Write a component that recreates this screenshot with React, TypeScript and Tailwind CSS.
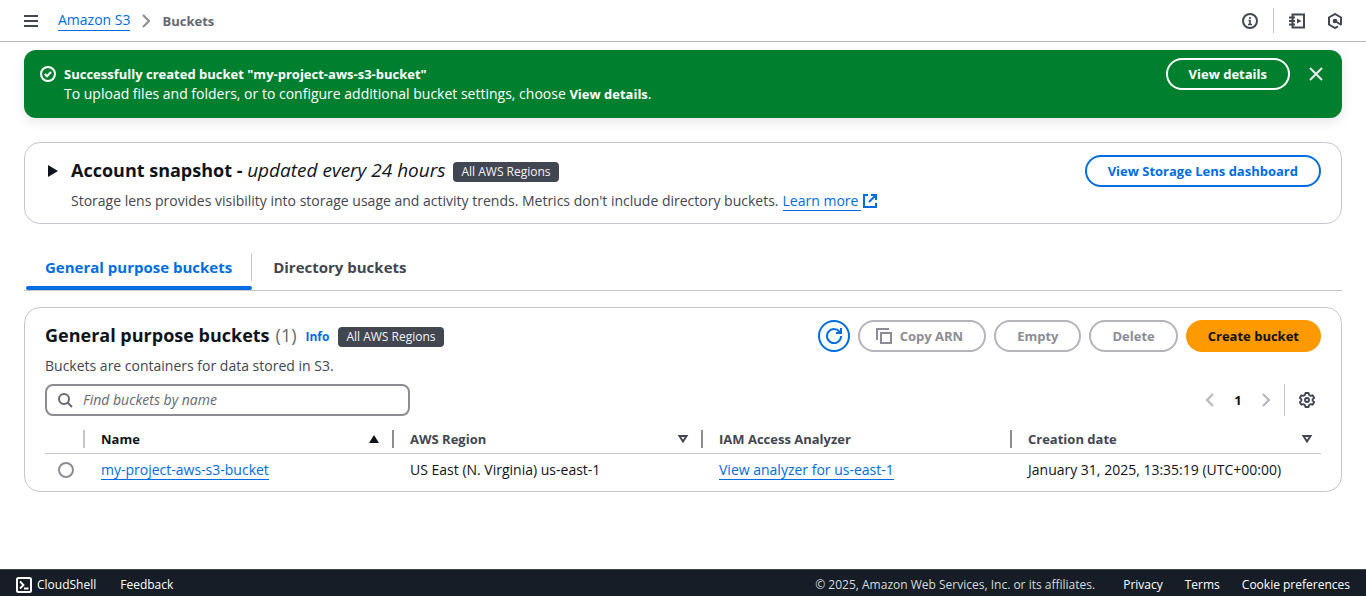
import React, { useState } from 'react';

type IconProps = { className?: string; children: React.ReactNode };

function Icon({ className = '', children }: IconProps) {
  return (
    <svg
      viewBox="0 0 16 16"
      className={`size-4 shrink-0 ${className}`}
      fill="none"
      stroke="currentColor"
      strokeWidth="2"
      aria-hidden="true"
    >
      {children}
    </svg>
  );
}

function RegionBadge() {
  return (
    <span className="mt-1 rounded bg-[#424650] px-2 text-xs leading-5 font-medium text-[#f3f3f7]">
      All AWS Regions
    </span>
  );
}

function ActionButton({ children, disabled = false }: { children: React.ReactNode; disabled?: boolean }) {
  return (
    <button
      type="button"
      disabled={disabled}
      className="flex h-8 items-center gap-2 rounded-full border-2 border-[#006ce0] px-[21px] text-[13px] font-bold whitespace-nowrap text-[#006ce0] disabled:border-[#b4b4bb] disabled:text-[#8c8c94] has-[svg]:pl-4"
    >
      {children}
    </button>
  );
}

function TopBar() {
  return (
    <header className="flex h-[42px] items-center border-b border-[#b4b4bb] px-[23px]">
      <button type="button" aria-label="Open navigation" className="text-[#424650]">
        <Icon>
          <path d="M1 3h14M1 8h14M1 13h14" />
        </Icon>
      </button>
      <nav aria-label="Breadcrumbs" className="ml-[19px] flex items-center gap-2">
        <a href="#s3" className="border-b border-[#006ce0] leading-5 text-[#006ce0]">
          Amazon S3
        </a>
        <Icon className="text-[#8c8c94]">
          <path d="m5 2 6 6-6 6" />
        </Icon>
        <span className="text-[13px] font-bold text-[#656871]">Buckets</span>
      </nav>
      <div className="ml-auto flex items-center text-[#424650]">
        <button type="button" aria-label="Info" className="px-[15px]">
          <Icon>
            <circle cx="8" cy="8" r="7" />
            <path d="M8 4v2M6.500 7.500H8V11.500M6 11.500h4" strokeWidth="1.600" />
          </Icon>
        </button>
        <span className="h-[25px] w-px bg-[#c6c6cd]" />
        <button type="button" aria-label="Tutorials" className="pr-[11px] pl-[15px]">
          <Icon>
            <path d="M3.500 1.500H15v13H3.500z" strokeWidth="2" />
            <path d="M0 4.500h6M0 8h6M0 11.500h6" strokeWidth="1.800" />
            <path d="m8 5.500 4.500 2.500L8 10.500z" fill="currentColor" stroke="none" />
          </Icon>
        </button>
        <button type="button" aria-label="Diagnose" className="pl-[11px]">
          <Icon>
            <path d="M13 11.200 14 10.500v-6L8 1 2 4.500v7L8 15l3-1.700" strokeWidth="2" />
            <path d="m8 8 6.500 4" />
            <circle cx="8" cy="8" r="2.300" fill="currentColor" stroke="none" />
          </Icon>
        </button>
      </div>
    </header>
  );
}

function SuccessBanner({ onClose }: { onClose: () => void }) {
  return (
    <section
      role="status"
      className="flex items-start rounded-xl bg-[#00802f] pt-2 pr-[10px] pb-[14px] pl-4 text-white shadow-[0_4px_12px_rgba(0,7,22,0.10)]"
    >
      <Icon className="mt-2">
        <circle cx="8" cy="8" r="7" />
        <path d="m4.800 8 2.200 2.300 4-4.300" />
      </Icon>
      <div className="ml-2 flex-1 pt-1.5 leading-5">
        <h2 className="text-[13px] leading-5 font-bold">Successfully created bucket "my-project-aws-s3-bucket"</h2>
        <p>
          To upload files and folders, or to configure additional bucket settings, choose{' '}
          <b className="text-[13px]">View details</b>.
        </p>
      </div>
      <button type="button" className="h-8 rounded-full border-2 border-white px-[21px] text-[13px] font-bold">
        View details
      </button>
      <button
        type="button"
        aria-label="Dismiss"
        onClick={onClose}
        className="ml-[10px] grid size-8 place-items-center text-[#ebebf0]"
      >
        <Icon>
          <path d="m2 2 12 12M14 2 2 14" />
        </Icon>
      </button>
    </section>
  );
}

function AccountSnapshot() {
  return (
    <section className="mt-6 flex items-start rounded-2xl border border-[#c6c6cd] px-5 pt-3 pb-3">
      <button type="button" aria-label="Expand account snapshot" className="mt-2 w-[26px] text-[#0f141a]">
        <Icon>
          <path d="m3 2 10 6-10 6z" fill="currentColor" stroke="none" />
        </Icon>
      </button>
      <div className="flex-1">
        <h2 className="flex items-center gap-2 text-lg leading-[30px] font-bold text-[#0f141a]">
          <span>
            Account snapshot - <i className="text-[19px] font-normal">updated every 24 hours</i>
          </span>
          <RegionBadge />
        </h2>
        <p className="mt-1.5 flex items-center leading-5 text-[#424650]">
          Storage lens provides visibility into storage usage and activity trends. Metrics don't include directory
          buckets.
          <a href="#learn" className="ml-1 flex items-center gap-px text-[#006ce0]">
            <span className="border-b border-[#006ce0] pr-[3px] leading-[18px]">Learn more</span>
            <Icon>
              <path d="M6 2H2v12h12v-4M9 2h5v5M14 2 7 9" />
            </Icon>
          </a>
        </p>
      </div>
      <ActionButton>View Storage Lens dashboard</ActionButton>
    </section>
  );
}

const tabs = ['General purpose buckets', 'Directory buckets'];

function Tabs() {
  const [active, setActive] = useState(0);
  return (
    <div role="tablist" className="mt-5 flex gap-0.5 border-b border-[#c6c6cd] pl-0.5 text-[15px] font-bold">
      {tabs.map((label, i) => (
        <button
          key={label}
          type="button"
          role="tab"
          aria-selected={active === i}
          onClick={() => setActive(i)}
          className="group flex flex-col text-[#424650] aria-selected:text-[#006ce0]"
        >
          <span className="mt-[9px] mb-[5px] border-[#c6c6cd] px-[19px] leading-7 group-first:border-r">{label}</span>
          <span className="h-1 w-full rounded-sm group-aria-selected:bg-[#006ce0]" />
        </button>
      ))}
    </div>
  );
}

const buckets = [
  {
    name: 'my-project-aws-s3-bucket',
    region: 'US East (N. Virginia) us-east-1',
    analyzer: 'View analyzer for us-east-1',
    created: 'January 31, 2025, 13:35:19 (UTC+00:00)',
  },
];

function SortIcon({ ascending = false }: { ascending?: boolean }) {
  return (
    <Icon>
      {ascending ? (
        <path d="M8 4 13 12H3z" fill="currentColor" stroke="none" />
      ) : (
        <path d="M4.500 5h7L8 10.500z" />
      )}
    </Icon>
  );
}

function ColumnHeader({ label, sort }: { label: string; sort?: 'asc' | 'none' }) {
  return (
    <th
      scope="col"
      aria-sort={sort === 'asc' ? 'ascending' : undefined}
      className="group border-b border-[#c6c6cd] p-0 pt-1.5 pb-[5px] aria-[sort=ascending]:text-[#0f141a]"
    >
      <div className="flex h-[18px] items-center justify-between border-[#8c8c94] pr-[10px] pl-4 group-last:pr-1.5">
        <span>{label}</span>
        {sort && <SortIcon ascending={sort === 'asc'} />}
      </div>
    </th>
  );
}

function BucketTable() {
  return (
    <table className="mt-2 w-full table-fixed border-separate border-spacing-0 text-left">
      <colgroup>
        <col className="w-10" />
        <col />
        <col />
        <col />
        <col />
      </colgroup>
      <thead className="text-[13px] text-[#424650] [&_th:not(:last-child)>div]:border-r-2">
        <tr>
          <th scope="col" aria-label="Selection" className="border-b border-[#c6c6cd] p-0 pt-1.5 pb-[5px]">
            <div className="h-[18px] border-[#c6c6cd]" />
          </th>
          <ColumnHeader label="Name" sort="asc" />
          <ColumnHeader label="AWS Region" sort="none" />
          <ColumnHeader label="IAM Access Analyzer" />
          <ColumnHeader label="Creation date" sort="none" />
        </tr>
      </thead>
      <tbody>
        {buckets.map((b) => (
          <tr key={b.name} className="h-8 text-[#0f141a]">
            <td className="p-0 pl-[13px]">
              <input
                type="radio"
                name="bucket"
                aria-label={b.name}
                className="block size-4 appearance-none rounded-full border-2 border-[#8c8c94] checked:border-[5px] checked:border-[#006ce0]"
              />
            </td>
            <td className="p-0 pl-4">
              <a href="#bucket" className="inline-block border-b border-[#006ce0] leading-[18px] text-[#006ce0]">
                {b.name}
              </a>
            </td>
            <td className="p-0 pl-4">{b.region}</td>
            <td className="p-0 pl-4">
              <a href="#analyzer" className="inline-block border-b border-[#006ce0] leading-[18px] text-[#006ce0]">
                {b.analyzer}
              </a>
            </td>
            <td className="p-0 pl-4">{b.created}</td>
          </tr>
        ))}
      </tbody>
    </table>
  );
}

function BucketsPanel() {
  return (
    <section className="mt-4 rounded-2xl border border-[#c6c6cd] px-5 pt-3 pb-[5px]">
      <div className="flex items-start justify-between">
        <div>
          <h2 className="flex items-center text-lg leading-[30px] font-bold text-[#0f141a]">
            General purpose buckets
            <span className="ml-1.5 font-normal text-[#656871]">(1)</span>
            <a href="#info" className="mx-[9px] pt-1 text-xs text-[#006ce0]">
              Info
            </a>
            <RegionBadge />
          </h2>
          <p className="mt-1.5 leading-5 text-[#424650]">Buckets are containers for data stored in S3.</p>
        </div>
        <div className="flex gap-2">
          <button
            type="button"
            aria-label="Refresh"
            className="grid size-8 place-items-center rounded-full border-2 border-[#006ce0] text-[#006ce0]"
          >
            <Icon>
              <path d="M15 8A7 7 0 1 1 14 4.500M15 0v5h-5" />
            </Icon>
          </button>
          <ActionButton disabled>
            <Icon>
              <path d="M1 12V1h12M5 5h10v10H5z" />
            </Icon>
            Copy ARN
          </ActionButton>
          <ActionButton disabled>Empty</ActionButton>
          <ActionButton disabled>Delete</ActionButton>
          <button type="button" className="h-8 rounded-full bg-[#ff9900] px-[22px] text-[13px] font-bold text-[#0f141a]">
            Create bucket
          </button>
        </div>
      </div>
      <div className="mt-2 flex items-center justify-between">
        <label className="flex h-8 w-[365px] items-center gap-[10px] rounded-lg border-2 border-[#8c8c94] px-[10px] text-[#656871]">
          <Icon>
            <circle cx="7" cy="7" r="5" />
            <path d="m10.500 10.500 4.500 4.500" />
          </Icon>
          <input
            type="text"
            aria-label="Find buckets by name"
            placeholder="Find buckets by name"
            className="min-w-0 flex-1 outline-none placeholder:text-[#656871] placeholder:italic"
          />
        </label>
        <div className="flex items-center">
          <button type="button" aria-label="Previous page" disabled className="text-[#b4b4bb]">
            <Icon>
              <path d="m11 2-6 6 6 6" />
            </Icon>
          </button>
          <button type="button" className="w-10 text-[13px] font-bold text-[#0f141a]">
            1
          </button>
          <button type="button" aria-label="Next page" disabled className="text-[#b4b4bb]">
            <Icon>
              <path d="m5 2 6 6-6 6" />
            </Icon>
          </button>
          <span className="ml-[10px] h-8 w-px bg-[#c6c6cd]" />
          <button type="button" aria-label="Preferences" className="pr-1.5 pl-[14px] text-[#424650]">
            <Icon>
              <path
                d="M6.500 1h3l.6 2 1.500.8 2-.5 1.500 2.500-1.500 1.500v1.400l1.500 1.500-1.500 2.500-2-.5-1.500.8-.6 2h-3l-.6-2-1.500-.8-2 .5L.9 10.200l1.500-1.500V7.300L.9 5.800l1.500-2.500 2 .5L5.900 3z"
                strokeWidth="1.900"
                strokeLinejoin="round"
              />
              <circle cx="8" cy="8" r="2" strokeWidth="1.900" />
            </Icon>
          </button>
        </div>
      </div>
      <BucketTable />
    </section>
  );
}

function Footer() {
  return (
    <footer className="mt-auto flex items-center border-t border-[#424650] bg-[#161d26] px-4 pt-1.5 pb-0.5 text-xs leading-[18px] font-medium text-white">
      <a href="#cloudshell" className="flex items-center gap-[5px]">
        <Icon>
          <rect x="1" y="1" width="14" height="14" rx="1.500" />
          <path d="m4 4.500 3.500 3.500L4 11.500M8 11.500h4.500" strokeWidth="1.800" />
        </Icon>
        CloudShell
      </a>
      <a href="#feedback" className="ml-6">
        Feedback
      </a>
      <span className="ml-auto font-normal text-[#d5dbdb]">© 2025, Amazon Web Services, Inc. or its affiliates.</span>
      <a href="#privacy" className="ml-7">
        Privacy
      </a>
      <a href="#terms" className="ml-[22px]">
        Terms
      </a>
      <a href="#cookies" className="ml-[22px]">
        Cookie preferences
      </a>
    </footer>
  );
}

export default function App() {
  const [showBanner, setShowBanner] = useState(true);
  return (
    <div className="flex min-h-screen flex-col bg-white font-['Open_Sans','Noto_Sans',sans-serif] text-sm leading-5">
      <TopBar />
      <main className="px-6 pt-2">
        {showBanner && <SuccessBanner onClose={() => setShowBanner(false)} />}
        <AccountSnapshot />
        <Tabs />
        <BucketsPanel />
      </main>
      <Footer />
    </div>
  );
}
